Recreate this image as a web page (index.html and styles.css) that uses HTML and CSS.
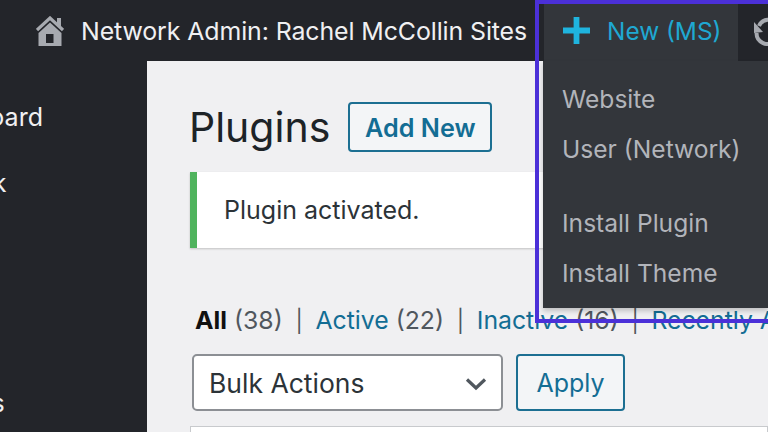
FILE: index.html
```html
<!DOCTYPE html>
<html lang="en">
<head>
<meta charset="utf-8">
<title>Plugins</title>
<link rel="stylesheet" href="styles.css">
</head>
<body>
<div class="page">
  <header class="adminbar">
    <div class="home">
      <svg class="home-icon" viewBox="0 0 28 30" aria-hidden="true"><path d="M21 2 H25 V10 H21 Z" fill="#a7aab0"/><path d="M1 14 L14 2 L27 14" fill="none" stroke="#a7aab0" stroke-width="3.2"/><path d="M2.5 17 L14 6.5 L25.5 17 V30 H2.5 Z" fill="#a7aab0"/><rect x="10" y="18" width="7.5" height="9" fill="#23252a"/></svg>
      <span class="site-name">Network Admin: Rachel McCollin Sites</span>
    </div>
    <div class="new-item">
      <svg class="plus" viewBox="0 0 28 28" aria-hidden="true"><path d="M11 0 H17 V11 H28 V17 H17 V28 H11 V17 H0 V11 H11 Z" fill="#1fb4de"/></svg>
      <span>New (MS)</span>
    </div>
    <div class="updates">
      <svg class="refresh" viewBox="0 0 30 30" aria-hidden="true"><path d="M6 10 A10.5 10.5 0 0 1 24 8" fill="none" stroke="#a7aab0" stroke-width="4"/><path d="M1 6 L10 16 L1 17 Z" fill="#a7aab0"/><path d="M3.5 17 A11 11 0 0 0 22 25" fill="none" stroke="#a7aab0" stroke-width="4"/></svg>
    </div>
  </header>
  <div class="body-row">
    <nav class="sidebar">
      <div class="side-item first">Dashboard</div>
      <div class="side-item second">Network</div>
      <div class="side-item last">Settings</div>
    </nav>
    <main class="content">
      <div class="title-row">
        <h1>Plugins</h1>
        <a class="btn add-new">Add New</a>
      </div>
      <div class="notice">Plugin activated.</div>
      <div class="filters">
        <strong>All</strong><span class="count"> (38)</span><span class="sep">|</span><a>Active</a><span class="count"> (22)</span><span class="sep">|</span><a>Inactive</a><span class="count"> (16)</span><span class="sep">|</span><a>Recently Active</a>
      </div>
      <div class="actions">
        <div class="select">Bulk Actions
          <svg class="chevron" viewBox="0 0 22 14" aria-hidden="true"><path d="M2 2.5 L11 11 L20 2.5" fill="none" stroke="#50575e" stroke-width="3.2"/></svg>
        </div>
        <a class="btn apply">Apply</a>
      </div>
      <div class="table-top"></div>
    </main>
  </div>
  <div class="dropdown">
    <div class="dd-item">Website</div>
    <div class="dd-item">User (Network)</div>
    <div class="dd-item gap">Install Plugin</div>
    <div class="dd-item">Install Theme</div>
  </div>
  <div class="highlight"></div>
</div>
</body>
</html>
```
FILE: styles.css
```css
* { box-sizing: border-box; }
html, body { margin: 0; padding: 0; }
body { width: 768px; height: 432px; overflow: hidden; font-family: Inter, "Liberation Sans", sans-serif; }
.page { position: relative; width: 768px; height: 432px; overflow: hidden; background: #f0f0f2; }

.adminbar { display: flex; height: 61px; background: #23252a; align-items: stretch; }
.home { flex: none; display: flex; align-items: center; width: 544px; padding-left: 36px; color: #f0f0f2; font-size: 24.9px; letter-spacing: -0.1px; }
.home-icon { width: 28px; height: 30px; margin-right: 17px; flex: none; }
.new-item { flex: none; display: flex; align-items: center; width: 194px; padding-left: 19px; background: #33363b; color: #1fa8d2; font-size: 24.4px; }
.plus { width: 27px; height: 27px; margin-right: 17px; }
.updates { flex: none; width: 30px; overflow: hidden; display: flex; align-items: center; padding-left: 15px; }
.refresh { width: 30px; height: 30px; flex: none; }

.body-row { display: flex; height: 371px; }
.sidebar { width: 147px; background: #23252a; color: #f0f0f2; font-size: 25px; padding-top: 42px; overflow: hidden; }
.side-item { height: 66px; line-height: 28px; white-space: nowrap; }
.side-item.first { text-indent: -86px; }
.side-item.second { text-indent: -94px; }
.side-item.last { margin-top: 154px; text-indent: -91px; }

.content { flex: 1; padding: 41px 0 0 43px; min-width: 0; }
.title-row { display: flex; align-items: center; height: 50px; }
h1 { margin: 0 18px 0 -1px; font-size: 41px; font-weight: 400; color: #1d2327; }
.btn { display: flex; align-items: center; justify-content: center; padding-top: 1px; border: 2px solid #1c6f92; border-radius: 4px; background: #f3f5f7; color: #136d94; font-size: 25px; }
.add-new { width: 144px; height: 50px; font-weight: 600; font-size: 25.2px; }

.notice { height: 76px; margin-top: 20px; padding-left: 27px; display: flex; align-items: center; background: #fff; border-left: 7px solid #4fb35d; box-shadow: 0 1px 2px rgba(0,0,0,.2); font-size: 25px; color: #2c3338; width: 621px; }

.filters { margin-top: 55px; padding-left: 5px; height: 34px; line-height: 34px; font-size: 24.8px; color: #50575e; white-space: nowrap; }
.filters strong { color: #111; font-weight: 700; }
.filters a { color: #136d94; }
.sep { margin: 0 12.7px; font-size: 22px; }

.actions { display: flex; margin-top: 17px; padding-left: 2px; }
.select { position: relative; width: 311px; height: 57px; display: flex; align-items: center; padding-left: 15px; background: #fff; border: 2px solid #8c8f94; border-radius: 5px; font-size: 26.5px; color: #2c3338; }
.chevron { position: absolute; right: 14px; top: 21px; width: 22px; height: 14px; }
.apply { width: 109px; height: 57px; margin-left: 13px; }
.table-top { margin-top: 15px; height: 30px; background: #fff; border: 1px solid #c8cacd; }

.dropdown { position: absolute; left: 543px; top: 61px; width: 225px; height: 247px; background: #33363b; padding-top: 13px; color: #b2b4ba; font-size: 24.6px; box-shadow: 0 3px 5px rgba(0,0,0,.2); }
.dd-item { height: 50px; padding-left: 19px; line-height: 50px; white-space: nowrap; }
.dd-item.gap { margin-top: 24px; }
.highlight { position: absolute; left: 535px; top: 0; width: 260px; height: 323px; border: 4px solid #4b30d8; pointer-events: none; }
```
